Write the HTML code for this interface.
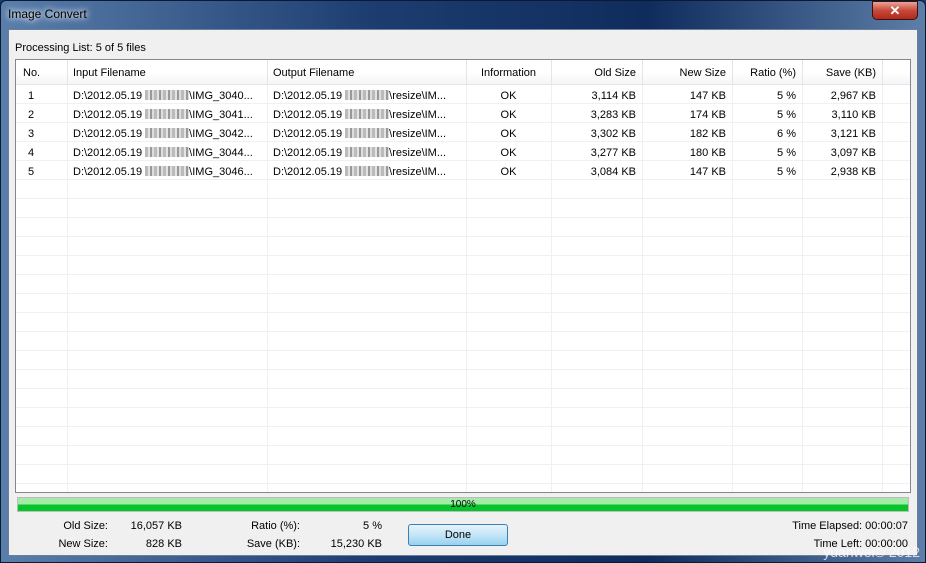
<!DOCTYPE html>
<html><head><style>
*{margin:0;padding:0;box-sizing:border-box}
body{width:926px;height:563px;overflow:hidden;font-family:"Liberation Sans",sans-serif;font-size:11px;color:#000;background:#1c3b6e;position:relative}
.frame{position:absolute;left:0;top:0;width:926px;height:563px;background:linear-gradient(90deg,#5a7fab 0%,#1d3d70 40%,#0f2c5c 70%,#5d7ea8 100%);border:1px solid #0a1a33;border-radius:6px 6px 0 0}
.title{position:absolute;left:8px;top:7px;font-size:12px;color:#000;text-shadow:0 0 6px #fff,0 0 8px #fff}
.close{position:absolute;left:872px;top:1px;width:46px;height:19px;border:1px solid #3b1010;border-radius:0 0 5px 5px;background:linear-gradient(#e8a597,#c8483a 50%,#b02a1a);color:#fff;font-weight:bold;text-align:center;line-height:17px;font-size:13px}
.client{position:absolute;left:8px;top:29px;width:910px;height:527px;background:#f0f0f0;border:1px solid #6b7f9c}
.lbl{position:absolute;font-size:11px;white-space:nowrap}
.list{position:absolute;left:15px;top:59px;width:896px;height:434px;background:#fff;border:1px solid #828790;overflow:hidden}
.hdr{position:absolute;left:0;top:0;height:25px;width:100%;background:linear-gradient(#fff,#fff 50%,#f4f5f7);border-bottom:1px solid #e5e5e5}
.cell{position:absolute;white-space:nowrap;overflow:hidden}
.vl{position:absolute;top:25px;bottom:0;width:1px;background:#f0f0f0}
.hv{position:absolute;top:0;height:25px;width:1px;background:#e5e5e5}
.hl{position:absolute;left:0;right:0;height:1px;background:#f0f0f0}
.blur{display:inline-block;width:44px;height:10px;vertical-align:-1px;background:repeating-linear-gradient(90deg,#bbb 0 3px,#e4e4e4 3px 5px,#999 5px 7px,#ddd 7px 9px)}
.prog{position:absolute;left:17px;top:497px;width:892px;height:15px;background:linear-gradient(#a5eaa8 0 50%,#06c52a 50%);border:1px solid #bcbcbc;text-align:center;font-size:10px;line-height:13px}
.btn{position:absolute;left:408px;top:524px;width:100px;height:22px;border:1px solid #3c7fb1;border-radius:3px;background:linear-gradient(#e5f4fc,#c4e5f6 50%,#98d1ef);text-align:center;line-height:20px}
</style></head><body>
<div class="frame"></div>
<div class="title">Image Convert</div>
<div class="close">✕</div>
<div class="client"></div>
<div class="lbl" style="left:15px;top:42px">Processing List: 5 of 5 files</div>
<div class="list">
<div class="hdr"></div>
<div class="hv" style="left:51px"></div><div class="hv" style="left:251px"></div><div class="hv" style="left:450px"></div><div class="hv" style="left:535px"></div><div class="hv" style="left:626px"></div><div class="hv" style="left:716px"></div><div class="hv" style="left:786px"></div><div class="hv" style="left:866px"></div>
<div class="vl" style="left:51px"></div><div class="vl" style="left:251px"></div><div class="vl" style="left:450px"></div><div class="vl" style="left:535px"></div><div class="vl" style="left:626px"></div><div class="vl" style="left:716px"></div><div class="vl" style="left:786px"></div><div class="vl" style="left:866px"></div>
<div id="g"></div>
<div class="cell" style="left:7px;top:7px">No.</div>
<div class="cell" style="left:57px;top:7px">Input Filename</div>
<div class="cell" style="left:257px;top:7px">Output Filename</div>
<div class="cell" style="left:450px;width:85px;text-align:center;top:7px">Information</div>
<div class="cell" style="left:535px;width:85px;text-align:right;top:7px">Old Size</div>
<div class="cell" style="left:626px;width:84px;text-align:right;top:7px">New Size</div>
<div class="cell" style="left:716px;width:64px;text-align:right;top:7px">Ratio (%)</div>
<div class="cell" style="left:786px;width:74px;text-align:right;top:7px">Save (KB)</div>
<script>
var d=[["1","3040","3,114","147","5","2,967"],["2","3041","3,283","174","5","3,110"],["3","3042","3,302","182","6","3,121"],["4","3044","3,277","180","5","3,097"],["5","3046","3,084","147","5","2,938"]];
var h="";for(var i=0;i<22;i++)h+='<div class="hl" style="top:'+(43+i*19)+'px"></div>';
d.forEach(function(r,i){var t=30+i*19;
h+='<div class="cell" style="left:12px;top:'+t+'px">'+r[0]+'</div>'+
'<div class="cell" style="left:57px;top:'+t+'px">D:\\2012.05.19 <span class="blur"></span>\\IMG_'+r[1]+'...</div>'+
'<div class="cell" style="left:257px;top:'+t+'px">D:\\2012.05.19 <span class="blur"></span>\\resize\\IM...</div>'+
'<div class="cell" style="left:450px;width:85px;text-align:center;top:'+t+'px">OK</div>'+
'<div class="cell" style="left:535px;width:85px;text-align:right;top:'+t+'px">'+r[2]+' KB</div>'+
'<div class="cell" style="left:626px;width:84px;text-align:right;top:'+t+'px">'+r[3]+' KB</div>'+
'<div class="cell" style="left:716px;width:64px;text-align:right;top:'+t+'px">'+r[4]+' %</div>'+
'<div class="cell" style="left:786px;width:74px;text-align:right;top:'+t+'px">'+r[5]+' KB</div>';});
document.getElementById("g").innerHTML=h;
</script>
</div>
<div class="prog">100%</div>
<div class="lbl" style="left:40px;width:68px;text-align:right;top:520px">Old Size:</div>
<div class="lbl" style="left:40px;width:68px;text-align:right;top:538px">New Size:</div>
<div class="lbl" style="left:110px;width:72px;text-align:right;top:520px">16,057 KB</div>
<div class="lbl" style="left:110px;width:72px;text-align:right;top:538px">828 KB</div>
<div class="lbl" style="left:220px;width:80px;text-align:right;top:520px">Ratio (%):</div>
<div class="lbl" style="left:220px;width:80px;text-align:right;top:538px">Save (KB):</div>
<div class="lbl" style="left:310px;width:72px;text-align:right;top:520px">5 %</div>
<div class="lbl" style="left:310px;width:72px;text-align:right;top:538px">15,230 KB</div>
<div class="btn">Done</div>
<div class="lbl" style="left:760px;width:148px;text-align:right;top:520px">Time Elapsed: 00:00:07</div>
<div class="lbl" style="left:760px;width:148px;text-align:right;top:538px">Time Left: 00:00:00</div>
<div class="lbl" style="left:800px;width:120px;text-align:right;top:544px;font-size:14px;color:#fff;opacity:.75">yuanwei© 2012</div>
</body></html>
